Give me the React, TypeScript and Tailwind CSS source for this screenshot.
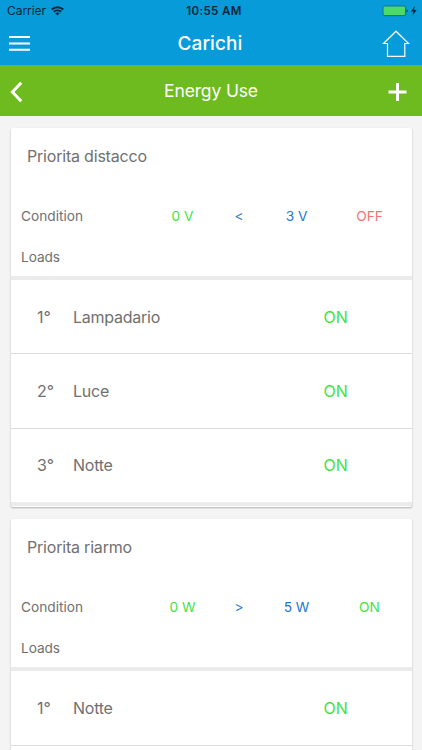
type Load = { position: string; name: string };

type Priority = {
  title: string;
  current: string;
  operator: string;
  threshold: string;
  action: 'ON' | 'OFF';
  loads: Load[];
};

const priorities: Priority[] = [
  {
    title: 'Priorita distacco',
    current: '0 V',
    operator: '<',
    threshold: '3 V',
    action: 'OFF',
    loads: [
      { position: '1°', name: 'Lampadario' },
      { position: '2°', name: 'Luce' },
      { position: '3°', name: 'Notte' },
    ],
  },
  {
    title: 'Priorita riarmo',
    current: '0 W',
    operator: '>',
    threshold: '5 W',
    action: 'ON',
    loads: [{ position: '1°', name: 'Notte' }],
  },
];

function StatusBar() {
  return (
    <div className="grid h-[22px] grid-cols-[1fr_auto_1fr] items-center pr-[4px] pl-[7px] text-[#06263a]">
      <div className="flex items-center gap-[5px]">
        <span className="text-[12px] leading-none tracking-[-0.05px]">Carrier</span>
        <svg width="13" height="10" viewBox="0 0 13 10" fill="none" stroke="currentColor" strokeWidth="1.9">
          <path d="M0.7 3.5C3.9 0.4 9.1 0.4 12.3 3.5" />
          <path d="M2.8 5.8C4.8 3.9 8.2 3.9 10.2 5.8" />
          <path d="M6.5 9.6L4.3 7.3C5.5 6.2 7.5 6.2 8.7 7.3Z" fill="currentColor" stroke="none" />
        </svg>
      </div>
      <span className="pt-px pl-[3px] text-[11.5px] leading-none font-semibold tracking-[0.35px] whitespace-nowrap">
        10:55 AM
      </span>
      <svg className="justify-self-end" width="36" height="12" viewBox="0 0 36 12">
        <rect x="1" y="1" width="22.6" height="9.6" rx="1.6" fill="#4cd964" stroke="#14708f" strokeWidth="1" />
        <path d="M24.5 4.2C26.4 4.6 26.4 7.2 24.5 7.6Z" fill="#075173" />
        <path d="M32.8 1L29 6.4H31.4L30.6 10.4L34.6 4.9H32.1Z" fill="#06263a" />
      </svg>
    </div>
  );
}

function Header() {
  return (
    <header className="h-[65px] bg-[#089bd9] text-white">
      <StatusBar />
      <div className="grid h-[43px] grid-cols-[1fr_auto_1fr] items-center pr-[12px] pl-[9px]">
        <svg width="21" height="15" viewBox="0 0 21 15" fill="none" stroke="white" strokeWidth="2">
          <path d="M0 1H21M0 7.4H21M0 13.8H21" />
        </svg>
        <h1 className="pl-px text-[19px] leading-none font-medium tracking-[0.1px]">Carichi</h1>
        <svg className="justify-self-end" width="28" height="28" viewBox="0 0 28 28" fill="none" stroke="white" strokeWidth="1.2">
          <path d="M14 1.2L1.5 13.5H5.5V26.3H22.8V13.5H26.6Z" />
        </svg>
      </div>
    </header>
  );
}

function Toolbar() {
  return (
    <div className="grid h-[51px] grid-cols-[1fr_auto_1fr] items-center bg-[#6dbb1e] pr-[15px] pl-[10px] text-white">
      <svg className="mt-[2px]" width="14" height="22" viewBox="0 0 14 22" fill="none" stroke="white" strokeWidth="3">
        <path d="M11.2 1.8L2.4 11L11.2 20.2" />
      </svg>
      <h2 className="pl-[5px] text-[17.5px] leading-none tracking-[-0.15px]">Energy Use</h2>
      <svg className="mt-[2px] justify-self-end" width="19" height="18" viewBox="0 0 19 18" fill="none" stroke="white" strokeWidth="3">
        <path d="M0.5 9H18.5M9.5 0V18" />
      </svg>
    </div>
  );
}

function LoadRow({ load }: { load: Load }) {
  return (
    <li className="flex h-[74.4px] items-center border-b border-[#dcdcdc] pl-[26px] text-[16px] last:h-[73.4px] [&:last-child:not(:first-child)]:border-b-0 first:last:h-[74.4px]">
      <span className="w-[36px]">{load.position}</span>
      <span className="w-[250.5px] tracking-[-0.25px]">{load.name}</span>
      <span className="text-[#44e244]">ON</span>
    </li>
  );
}

function PriorityCard({ priority }: { priority: Priority }) {
  return (
    <section className="rounded-[2px] bg-white pb-px text-[#707070] shadow-[0_1px_2px_rgba(0,0,0,0.28)]">
      <h3 className="flex h-[56px] items-center pl-[16px] text-[16px] tracking-[-0.2px]">{priority.title}</h3>
      <div className="grid h-[64px] grid-cols-[143px_57px_56px_59px_87px] items-center text-center text-[13.7px]">
        <span className="pl-[10px] text-left">Condition</span>
        <span className="text-[#44e244]">{priority.current}</span>
        <span className="text-[#2375d8]">{priority.operator}</span>
        <span className="text-[#2375d8]">{priority.threshold}</span>
        <span className={priority.action === 'ON' ? 'text-[#44e244]' : 'text-[#f27474]'}>{priority.action}</span>
      </div>
      <div className="flex h-[28px] items-start pl-[10px] text-[13.7px] leading-[18px] tracking-[-0.1px]">Loads</div>
      <ul className="border-y-4 border-[#ebebeb]">
        {priority.loads.map((load) => (
          <LoadRow key={load.position} load={load} />
        ))}
        {priority.loads.length === 1 && <li className="h-[74px]" />}
      </ul>
    </section>
  );
}

export default function App() {
  return (
    <div className="h-[750px] overflow-hidden bg-[#f4f4f4] font-[Inter,sans-serif]">
      <Header />
      <Toolbar />
      <main className="flex flex-col gap-[12px] pt-[12px] pr-[10px] pl-[11px]">
        {priorities.map((priority) => (
          <PriorityCard key={priority.title} priority={priority} />
        ))}
      </main>
    </div>
  );
}
